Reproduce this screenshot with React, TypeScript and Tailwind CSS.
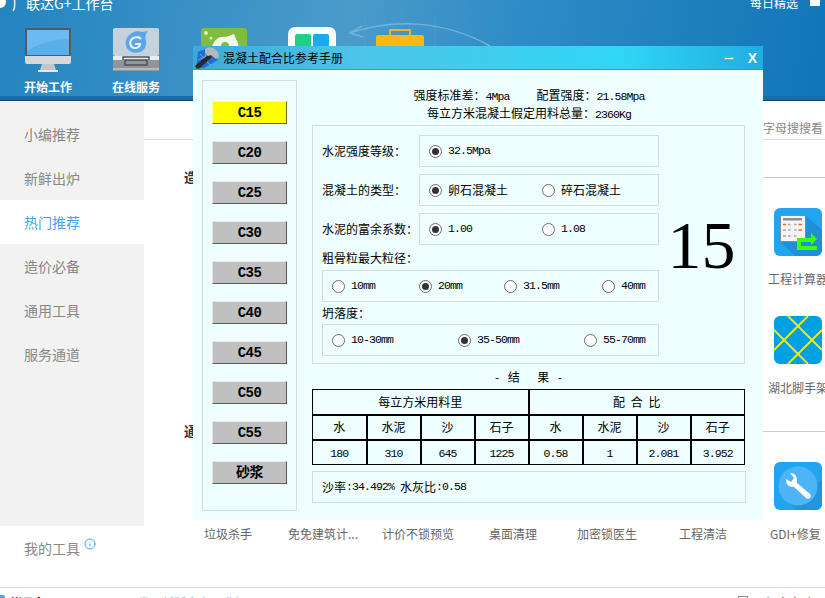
import React from "react";
import { Info } from "lucide-react";

const grades = ["C15", "C20", "C25", "C30", "C35", "C40", "C45", "C50", "C55", "砂浆"];
const menu = ["小编推荐", "新鲜出炉", "热门推荐", "造价必备", "通用工具", "服务通道"];
const bottomTools = [
  { name: "垃圾杀手", w: "w-[84px]" },
  { name: "免免建筑计...", w: "w-[94px]" },
  { name: "计价不锁预览", w: "w-[107px]" },
  { name: "桌面清理", w: "w-[88px]" },
  { name: "加密锁医生", w: "w-[102px]" },
  { name: "工程清洁", w: "w-[91px]" },
  { name: "GDI+修复", w: "w-[60px]" },
];

const Mono: React.FC<{ children: React.ReactNode }> = ({ children }) => (
  <span className="font-['Liberation_Mono',monospace] text-[11.5px] leading-[12px] tracking-[-0.9px]">{children}</span>
);

const Radio: React.FC<{ checked?: boolean }> = ({ checked }) => (
  <span className="w-[13px] h-[13px] shrink-0 rounded-full border border-[#6b6b6b] bg-white flex items-center justify-center">
    {checked && <span className="w-[7px] h-[7px] rounded-full bg-[#333]"></span>}
  </span>
);

const Option: React.FC<{ w: string; checked?: boolean; children: React.ReactNode }> = ({ w, checked, children }) => (
  <div className={`${w} flex items-center gap-[6px] whitespace-nowrap`}>
    <Radio checked={checked} />
    {children}
  </div>
);

const Monitor = () => (
  <svg width="48" height="48" viewBox="0 0 48 48">
    <rect x="1" y="1" width="46" height="36" rx="2" fill="#d6d9dc" />
    <rect x="1" y="1" width="46" height="28" fill="#555a60" />
    <rect x="3" y="3" width="42" height="25" fill="#5aaeea" />
    <path d="M3 3h42v9Q22 12 3 24z" fill="#6cbaf0" />
    <path d="M18 37h12l2 6H16z" fill="#c3c6c9" />
    <rect x="14" y="43" width="20" height="2" fill="#e8e9ea" />
  </svg>
);

const Drawer = () => (
  <svg width="48" height="48" viewBox="0 0 48 48">
    <rect x="1" y="1" width="46" height="28" rx="2" fill="#c5d2dc" />
    <path d="M36 4c-2 0-4 1-6 1-3-1-7-1-10 1-6 3-8 10-5 15 3 5 10 6 15 3 3-2 5-6 4-10-1-3-1-6 2-10z" fill="#5aa6ec" />
    <path d="M29 12c-3-3-8-2-10 1-2 4 0 8 4 8 3 0 5-2 5-4h-5" fill="none" stroke="#e6f1fb" strokeWidth="2.2" />
    <rect x="1" y="29" width="46" height="4" fill="#e9edf0" />
    <rect x="1" y="33" width="46" height="11" fill="#8f959a" />
    <rect x="1" y="41" width="46" height="2" fill="#b4b9bd" />
    <path d="M11 33v-3h26v3M13 38h22v-5H13z" fill="none" stroke="#4b5156" strokeWidth="1.5" />
  </svg>
);

const GreenTile = () => (
  <svg width="48" height="48" viewBox="0 0 48 48">
    <rect x="1" y="1" width="46" height="46" rx="3" fill="#80bd3c" />
    <circle cx="6" cy="6" r="2" fill="#d9efb8" />
    <circle cx="11" cy="11" r="1.5" fill="#d9efb8" />
    <path d="M12 20c2-8 8-11 14-10l8-3 2 5c3 4 3 8 2 12H12z" fill="#f2f7e8" />
    <circle cx="25" cy="19" r="4" fill="#80bd3c" />
  </svg>
);

const CardTile = () => (
  <svg width="48" height="48" viewBox="0 0 48 48">
    <rect x="0" y="0" width="48" height="48" rx="7" fill="#fdfdfd" />
    <rect x="7" y="7" width="16" height="34" rx="2" fill="#1ecf86" />
    <rect x="25" y="7" width="16" height="34" rx="2" fill="#1ea9ee" />
  </svg>
);

const Briefcase = () => (
  <svg width="48" height="48" viewBox="0 0 48 48">
    <path d="M14 9V3h20v6" fill="none" stroke="#f7b21a" strokeWidth="2" />
    <rect x="0" y="8" width="48" height="38" rx="3" fill="#f9a70f" />
    <rect x="0" y="8" width="48" height="12" rx="3" fill="#fdb913" />
  </svg>
);

const CalcIcon = () => (
  <svg width="48" height="48" viewBox="0 0 48 48">
    <rect width="48" height="48" rx="6" fill="#21a5f0" />
    <path d="M31 7l17 15v20a6 6 0 0 1-6 6H21L6 33z" fill="#1f8fd6" />
    <rect x="6.5" y="7.5" width="25" height="26" fill="#f4f4f4" stroke="#8a8a8a" />
    <rect x="9" y="10" width="19" height="2.5" fill="#8f8f8f" />
    <path d="M9 16.5h3M24.5 16.5h3.5M24.5 22h3.5" stroke="#f26b21" strokeWidth="1.6" />
    <path d="M14 16.5h2.500M20 16.5h2.500M9 22h3M14 22h2.500M20 22h2.500M9 28h3M14 28h2.500M20 28h2.500" stroke="#a8a8a8" strokeWidth="1.6" />
    <path d="M23 30H37V25L43 31L37 37V34H27V38H43V42H23Z" fill="#3dff00" />
  </svg>
);

const CrossIcon = () => (
  <svg width="48" height="48" viewBox="0 0 48 48">
    <rect width="48" height="48" rx="6" fill="#00a0e4" />
    <path d="M0 14L34 48M14 0L48 34M0 34L34 0M14 48L48 14" stroke="#ffee00" strokeWidth="1.8" fill="none" />
  </svg>
);

const WrenchIcon = () => (
  <svg width="48" height="48" viewBox="0 0 48 48">
    <rect width="48" height="48" rx="6" fill="#21a5f0" />
    <path d="M48 18v24a6 6 0 0 1-6 6H22L10 36z" fill="#1f97de" />
    <circle cx="24" cy="24" r="19.500" fill="#4db5f7" />
    <path d="M22 14c-1-2-3-3-6-3l4 5-3 4-5-3c0 3 1 6 3 7 2 1 4 1 5 1l12 11c1 1 3 1 4 0s1-3 0-4L23 21c0-2 0-5-1-7z" fill="#fff" />
  </svg>
);

const HammerIcon = () => (
  <svg width="24" height="24" viewBox="0 0 24 24">
    <path d="M3 6l12-5 8 13-14 8H1z" fill="#1d6fd0" />
    <path d="M5 8l10 11M12 4L7 20M18 7L3 14" stroke="#7fb8f0" strokeWidth="0.8" fill="none" />
    <path d="M14 8l3 3L5 22c-1 1-3 1-4 0s-1-2 0-3z" fill="#2a2a2a" />
    <path d="M10 3c4-3 9-2 13 3l1 5-3 2-5-4-3 1-3-3z" fill="#b4b8bc" />
  </svg>
);

const App: React.FC = () => {
  return (
    <div className="relative w-[825px] h-[598px] overflow-hidden bg-white flex flex-col font-['Noto_Sans_CJK_SC','Liberation_Sans',sans-serif]">
      {/* Top bar */}
      <header className="relative h-[101px] shrink-0 flex flex-col bg-[linear-gradient(100deg,#2484c0_0%,#4a9bca_42%,#2f8cc6_62%,#1076b8_100%)]">
        <svg className="absolute left-[340px] top-[10px]" width="160" height="91" viewBox="0 0 160 91">
          <path d="M10 23C50 10 100 8 150 36" fill="none" stroke="#74b2da" strokeWidth="1.5" />
          <path d="M22 16L10 23l13 4" fill="none" stroke="#74b2da" strokeWidth="1.5" />
          <path d="M25 7V91M95 7V91" stroke="#5fa5d2" strokeWidth="1" opacity="0.5" />
        </svg>
        <div className="relative h-[27px] flex justify-between text-white">
          <div className="flex items-start gap-[6px] -mt-[5px]">
            <span className="w-[6px] h-[12px] rounded-r-full bg-white mt-[1px]"></span>
            <span className="text-[14px] leading-[16px]">广联达G+工作台</span>
          </div>
          <div className="flex items-start gap-[12px] pr-[5px] -mt-[5px]">
            <span className="text-[12px] leading-[16px]">每日精选</span>
            <span className="w-[10px] h-[11px] rounded-t-full bg-white"></span>
          </div>
        </div>
        <nav className="relative flex pl-[24px] gap-[40px]">
          <div className="w-[48px] flex flex-col items-center">
            <Monitor />
            <span className="text-[12px] leading-[16px] mt-[4px] font-bold text-white whitespace-nowrap">开始工作</span>
          </div>
          <div className="w-[48px] flex flex-col items-center">
            <Drawer />
            <span className="text-[12px] leading-[16px] mt-[4px] font-bold text-white whitespace-nowrap">在线服务</span>
          </div>
          <GreenTile />
          <CardTile />
          <Briefcase />
        </nav>
        <div className="absolute left-0 right-0 bottom-0 h-[5px] bg-[#1a6ba3] border-b border-[#0c4a73]"></div>
      </header>

      <div className="flex flex-1 min-h-0">
        {/* Sidebar */}
        <aside className="w-[144px] shrink-0 flex flex-col text-[14px] text-[#888]">
          <div className="h-[425px] bg-[#f2f2f2] pt-[11px]">
            {menu.map((item) => (
              <div
                key={item}
                className={`h-[44px] pl-[24px] flex items-center ${item === "热门推荐" ? "bg-white text-[#3ea6f5]" : ""}`}
              >
                {item}
              </div>
            ))}
          </div>
          <div className="pl-[24px] pt-[14px] flex items-start gap-[4px] leading-[16px]">
            我的工具
            <Info className="w-[12px] h-[12px] mt-[-2px] text-[#3ea6f5]" />
          </div>
        </aside>

        {/* Tool list */}
        <main className="flex-1 flex flex-col text-[12px] text-[#666]">
          <div className="h-[39px] border-b border-[#ddd] flex items-end justify-end pr-[7px] pb-[3px] leading-[16px] text-[#888]">
            字母搜搜看
          </div>
          <div className="h-[20px] mt-[27px] pl-[40px] flex items-center gap-[8px]">
            <span className="text-[13px] font-bold text-[#333] whitespace-nowrap">造价必备</span>
            <div className="flex-1 h-px bg-[#ccc]"></div>
          </div>
          <div className="pl-[630px] mt-[21px]"><CalcIcon /></div>
          <div className="pl-[624px] mt-[15px] leading-[16px] whitespace-nowrap">工程计算器</div>
          <div className="pl-[630px] mt-[29px]"><CrossIcon /></div>
          <div className="pl-[624px] mt-[16px] leading-[16px] whitespace-nowrap">湖北脚手架</div>
          <div className="h-[20px] mt-[25px] pl-[40px] flex items-center gap-[8px]">
            <span className="text-[13px] font-bold text-[#333] whitespace-nowrap">通用工具</span>
            <div className="flex-1 h-px bg-[#ccc]"></div>
          </div>
          <div className="pl-[630px] mt-[21px]"><WrenchIcon /></div>
          <div className="pl-[60px] mt-[16px] flex leading-[16px] whitespace-nowrap">
            {bottomTools.map((t) => (
              <span key={t.name} className={`${t.w} shrink-0`}>{t.name}</span>
            ))}
          </div>
        </main>
      </div>

      {/* Footer, mostly below the fold */}
      <footer className="h-[11px] shrink-0 border-t border-[#d9d9d9] flex justify-between text-[12px] leading-[16px] pt-[7px] pr-[12px]">
        <div className="flex">
          <span className="w-[5px] h-[5px] rounded-r-full bg-[#4aa3ee] mr-[5px]"></span>
          <span className="text-[#222] font-bold mr-[92px]">帐号名</span>
          <span className="text-[#4aa3ee]">发现新版本立即升级</span>
        </div>
        <div className="flex items-start gap-[5px] text-[#222]">
          <span className="w-[10px] h-[10px] border border-[#888] mt-[1px]"></span>
          <span>开机自启动</span>
        </div>
      </footer>

      {/* Floating dialog window */}
      <section className="absolute left-[193px] top-[46px] w-[570px] h-[474px] bg-[#efffff] flex flex-col text-[12px] text-black">
        <div className="h-[24px] shrink-0 flex items-center pl-[2px] bg-[linear-gradient(90deg,#3da9d8_0%,#4cc6e8_30%,#30d6f6_75%,#1faee2_100%)] border-b border-[#1aa3dc]">
          <HammerIcon />
          <span className="ml-[4px] text-[12px]">混凝土配合比参考手册</span>
          <div className="ml-auto flex items-center gap-[14px] pr-[6px]">
            <span className="w-[10px] h-[3px] mt-[1px] bg-white border border-[#8ab]"></span>
            <span className="font-['Liberation_Sans',sans-serif] text-[14px] leading-[14px] font-bold text-white">X</span>
          </div>
        </div>

        <div className="flex gap-[15px] pt-[10px] pl-[9px]">
          {/* Grade buttons */}
          <div className="w-[95px] h-[431px] shrink-0 border border-[#d5dcdc] flex flex-col items-center pt-[20px] gap-[17px]">
            {grades.map((g, i) => (
              <button
                key={g}
                className={`w-[75px] h-[23px] shrink-0 border pt-[2px] flex items-center justify-center font-['Liberation_Mono','Noto_Sans_CJK_SC',monospace] text-[14px] font-bold tracking-[-0.6px] text-black ${
                  i === 0
                    ? "bg-[#ffff00] border-t-[#ffffa0] border-l-[#ffffa0] border-r-[#6b6b00] border-b-[#6b6b00]"
                    : "bg-[#c0c0c0] border-t-[#e6e6e6] border-l-[#e6e6e6] border-r-[#5a5a5a] border-b-[#5a5a5a]"
                }`}
              >
                {g}
              </button>
            ))}
          </div>

          <div className="w-[434px] shrink-0 flex flex-col">
            <div className="pt-[6px] h-[45px] text-center leading-[18px]">
              <div>
                强度标准差：<Mono>4Mpa</Mono>
                <span className="ml-[27px]">配置强度：</span>
                <Mono>21.58Mpa</Mono>
              </div>
              <div>
                每立方米混凝土假定用料总量：<Mono>2360Kg</Mono>
              </div>
            </div>

            {/* Options */}
            <div className="h-[239px] w-[433px] border border-[#d5dcdc] flex pl-[9px] pt-[9px]">
              <div className="w-[337px] shrink-0 flex flex-col">
                <div className="flex items-center h-[32px]">
                  <span className="w-[97px]">水泥强度等级：</span>
                  <div className="w-[240px] h-full border border-[#d5dcdc] flex items-center pl-[9px]">
                    <Option w="w-[113px]" checked><Mono>32.5Mpa</Mono></Option>
                  </div>
                </div>
                <div className="flex items-center h-[32px] mt-[7px]">
                  <span className="w-[97px]">混凝土的类型：</span>
                  <div className="w-[240px] h-full border border-[#d5dcdc] flex items-center pl-[9px]">
                    <Option w="w-[113px]" checked>卵石混凝土</Option>
                    <Option w="w-[113px]">碎石混凝土</Option>
                  </div>
                </div>
                <div className="flex items-center h-[32px] mt-[7px]">
                  <span className="w-[97px] whitespace-nowrap">水泥的富余系数：</span>
                  <div className="w-[240px] h-full border border-[#d5dcdc] flex items-center pl-[9px]">
                    <Option w="w-[113px]" checked><Mono>1.00</Mono></Option>
                    <Option w="w-[113px]"><Mono>1.08</Mono></Option>
                  </div>
                </div>
                <div className="h-[25px] flex items-center">粗骨粒最大粒径：</div>
                <div className="h-[32px] border border-[#d5dcdc] flex items-center pl-[9px]">
                  <Option w="w-[87px]"><Mono>10mm</Mono></Option>
                  <Option w="w-[85px]" checked><Mono>20mm</Mono></Option>
                  <Option w="w-[98px]"><Mono>31.5mm</Mono></Option>
                  <Option w="w-[50px]"><Mono>40mm</Mono></Option>
                </div>
                <div className="h-[22px] flex items-center">坍落度：</div>
                <div className="h-[32px] border border-[#d5dcdc] flex items-center pl-[9px]">
                  <Option w="w-[126px]"><Mono>10-30mm</Mono></Option>
                  <Option w="w-[126px]" checked><Mono>35-50mm</Mono></Option>
                  <Option w="w-[60px]"><Mono>55-70mm</Mono></Option>
                </div>
              </div>
              <div className="flex-1 flex items-center justify-center pb-[8px] font-['Liberation_Serif',serif] text-[68px] leading-none">
                15
              </div>
            </div>

            {/* Result */}
            <div className="h-[25px] w-[433px] flex items-center justify-center whitespace-pre [word-spacing:6px]">- 结  果 -</div>
            <table className="w-[433px] h-[75px] table-fixed border-collapse text-center [&_td:first-child]:border-l-1 [&_td:last-child]:border-r-1">
              <tbody>
                <tr className="h-[25px]">
                  <td colSpan={4} className="border-2 border-black border-t-1">每立方米用料里</td>
                  <td colSpan={4} className="border-2 border-black border-t-1 [word-spacing:3px]">配 合 比</td>
                </tr>
                <tr className="h-[25px]">
                  {["水", "水泥", "沙", "石子", "水", "水泥", "沙", "石子"].map((h, i) => (
                    <td key={i} className="border-2 border-black">{h}</td>
                  ))}
                </tr>
                <tr className="h-[25px]">
                  {["180", "310", "645", "1225", "0.58", "1", "2.081", "3.952"].map((v, i) => (
                    <td key={i} className="border-2 border-black border-b-1"><Mono>{v}</Mono></td>
                  ))}
                </tr>
              </tbody>
            </table>
            <div className="mt-[6px] h-[32px] w-[434px] border border-[#d5dcdc] flex items-center pl-[9px] whitespace-pre">
              沙率<Mono>:34.492% </Mono>水灰比<Mono>:0.58</Mono>
            </div>
          </div>
        </div>
      </section>
    </div>
  );
};

export default App;
